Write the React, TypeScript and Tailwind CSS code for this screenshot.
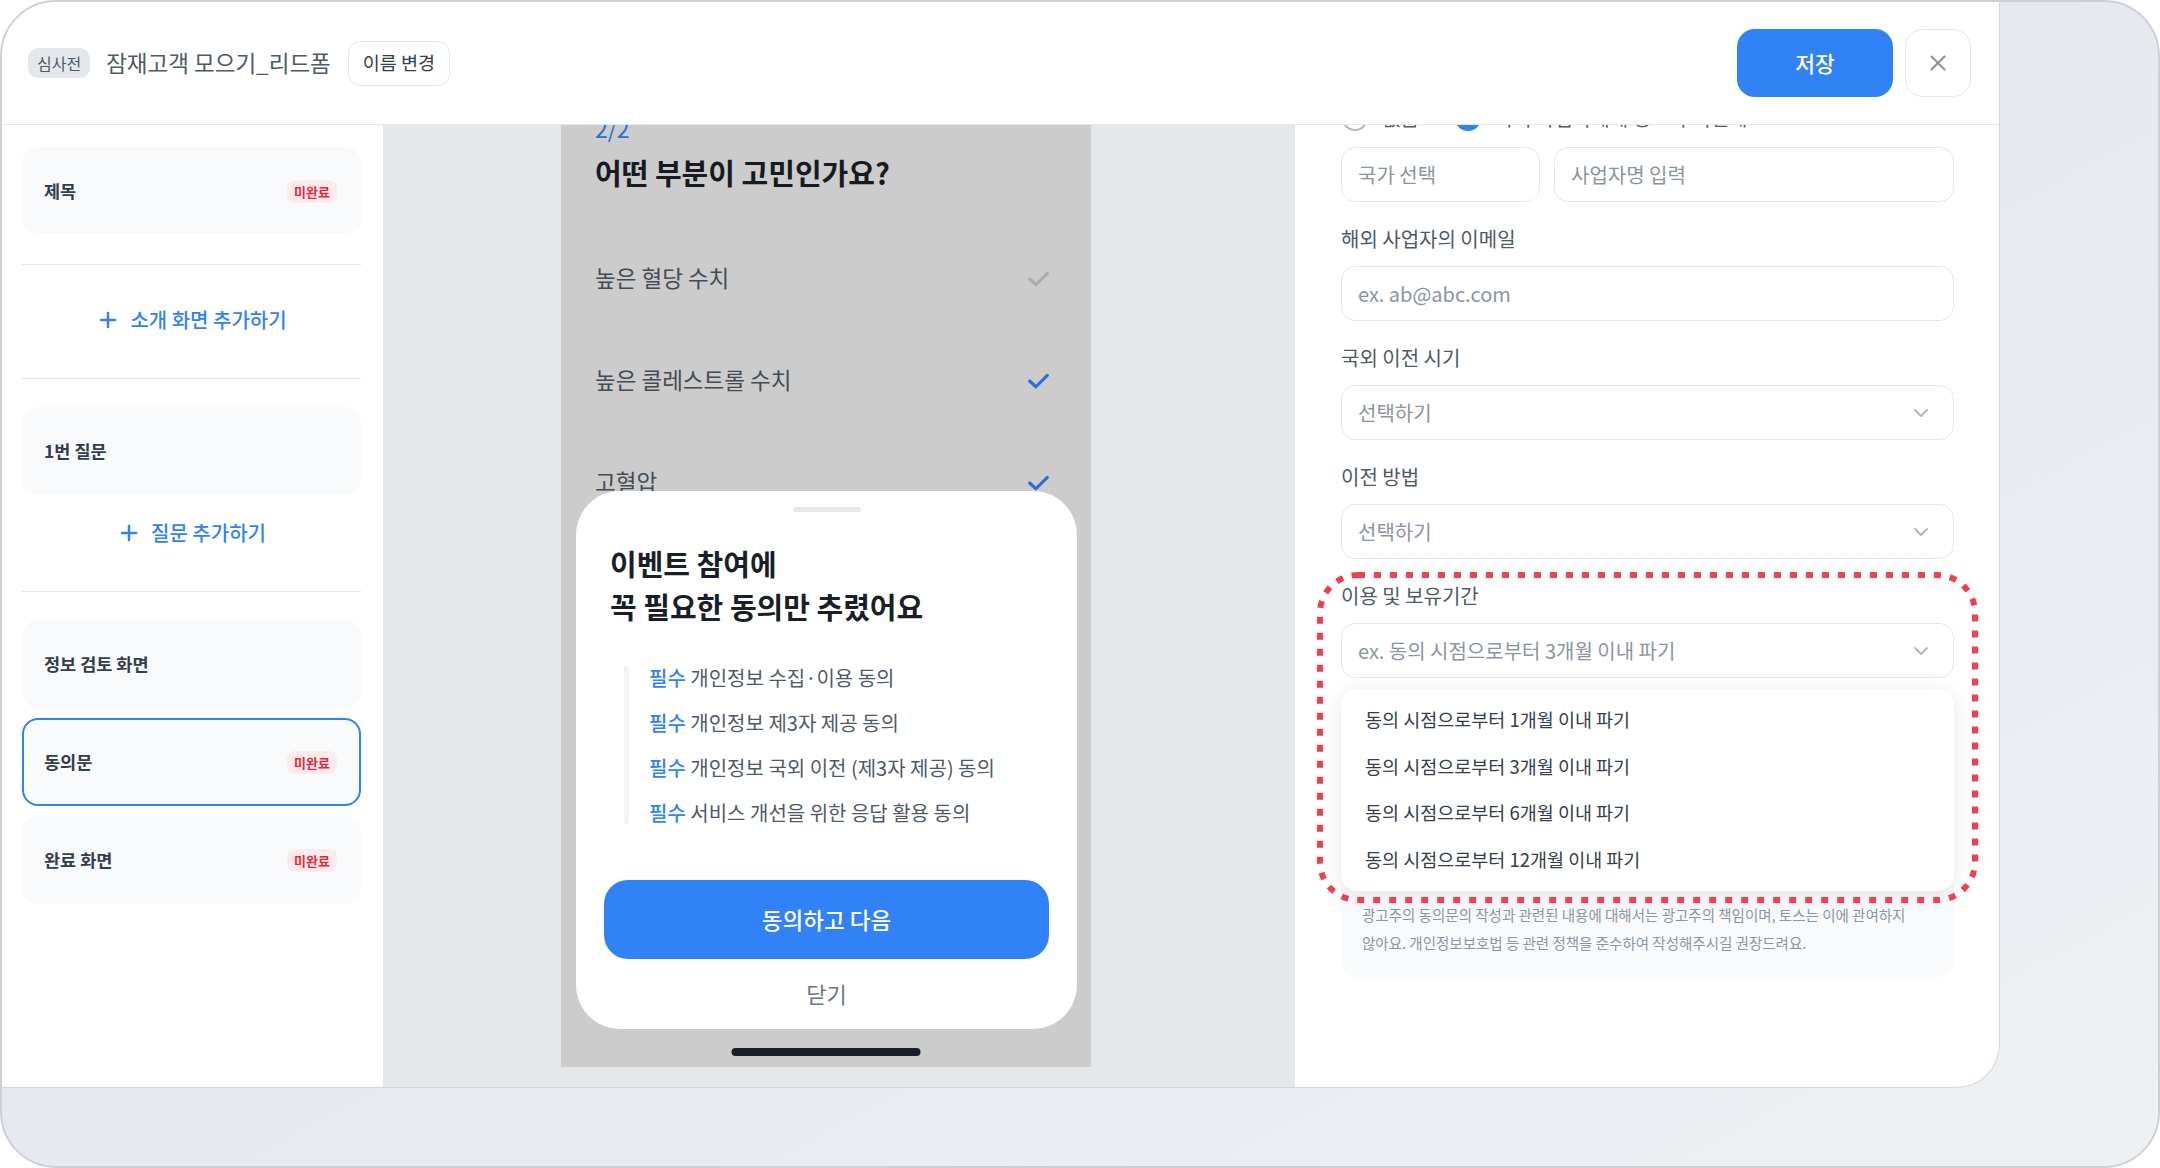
import React from 'react';
import { Plus, X, ChevronDown } from 'lucide-react';

interface StepCardProps {
  title: string;
  pending?: boolean;
  active?: boolean;
  className?: string;
}

const PendingBadge: React.FC = () => (
  <span className="rounded-[8px] bg-[#fdeaec] px-[7px] text-[13px] font-bold leading-[23px] text-[#e42939]">
    미완료
  </span>
);

const StepCard: React.FC<StepCardProps> = ({ title, pending, active, className = '' }) => (
  <div
    className={`flex h-[88px] items-center justify-between rounded-[16px] border-2 bg-[#f9fafb] pl-[20px] pr-[22px] ${
      active ? 'border-[#3182f6]' : 'border-transparent'
    } ${className}`}
  >
    <span className="text-[17.5px] font-semibold text-[#333d4b]">{title}</span>
    {pending && <PendingBadge />}
  </div>
);

const AddButton: React.FC<{ label: string; className?: string }> = ({ label, className = '' }) => (
  <button
    className={`flex h-[40px] w-full items-center justify-center gap-[10px] text-[20px] font-medium text-[#3182f6] ${className}`}
  >
    <Plus className="h-[24px] w-[24px]" strokeWidth={2.5} />
    {label}
  </button>
);

const Check: React.FC<{ on: boolean }> = ({ on }) => (
  <svg
    width="25"
    height="25"
    viewBox="0 0 24 24"
    fill="none"
    stroke={on ? '#2b6fd1' : '#a8adb3'}
    strokeWidth="3"
    strokeLinecap="round"
    strokeLinejoin="round"
  >
    <path d="M3.5 12.5l6 5.5L20.5 7" />
  </svg>
);

const Field: React.FC<{ label: string; className?: string; children: React.ReactNode }> = ({
  label,
  className = '',
  children,
}) => (
  <div className={`mt-[24px] ${className}`}>
    <p className="mb-[14px] text-[20px] leading-[26px] text-[#4e5968]">{label}</p>
    {children}
  </div>
);

const InputBox: React.FC<{ placeholder: string; select?: boolean; className?: string }> = ({
  placeholder,
  select,
  className = '',
}) => (
  <div
    className={`flex h-[55px] items-center justify-between rounded-[14px] border border-[#e5e8eb] bg-white pl-[16px] pr-[20px] ${className}`}
  >
    <span className="whitespace-nowrap text-[20px] text-[#8b95a1]">{placeholder}</span>
    {select && <ChevronDown className="h-[24px] w-[24px] text-[#b0b8c1]" strokeWidth={2} />}
  </div>
);

const questions = [
  { label: '높은 혈당 수치', on: false },
  { label: '높은 콜레스트롤 수치', on: true },
  { label: '고혈압', on: true },
];

const consents = [
  '개인정보 수집·이용 동의',
  '개인정보 제3자 제공 동의',
  '개인정보 국외 이전 (제3자 제공) 동의',
  '서비스 개선을 위한 응답 활용 동의',
];

const periods = [
  '동의 시점으로부터 1개월 이내 파기',
  '동의 시점으로부터 3개월 이내 파기',
  '동의 시점으로부터 6개월 이내 파기',
  '동의 시점으로부터 12개월 이내 파기',
];

const App: React.FC = () => {
  return (
    <div className="h-[1168px] w-[2160px] overflow-hidden rounded-[56px] border-2 border-[#cdd0d4] bg-linear-to-br from-[#dde3eb] to-[#eef1f4] font-['Noto_Sans_CJK_KR','Noto_Sans',sans-serif]">
      <div className="flex h-[1086px] w-[1998px] flex-col overflow-hidden rounded-br-[44px] border-b border-r border-[#d3d7dc] bg-white">
        {/* header */}
        <header className="flex h-[123px] shrink-0 items-center justify-between border-b border-[#e5e8eb] pl-[26px] pr-[28px]">
          <div className="flex items-center">
            <span className="rounded-[10px] bg-[#e5e8eb] px-[9px] text-[16px] leading-[30px] text-[#4e5968]">
              심사전
            </span>
            <h1 className="ml-[16px] text-[22.5px] text-[#4e5968]">잠재고객 모으기_리드폼</h1>
            <button className="ml-[17px] h-[45px] rounded-[12px] border border-[#e5e8eb] px-[14px] text-[18.5px] text-[#333d4b]">
              이름 변경
            </button>
          </div>
          <div className="flex items-center gap-[12px]">
            <button className="h-[68px] w-[156px] rounded-[18px] bg-[#3182f6] text-[21.5px] font-medium text-white">
              저장
            </button>
            <button className="flex h-[68px] w-[66px] items-center justify-center rounded-[18px] border border-[#e5e8eb]">
              <X className="h-[26px] w-[26px] text-[#8b95a1]" strokeWidth={2} />
            </button>
          </div>
        </header>

        <div className="flex min-h-0 flex-1">
          {/* steps */}
          <aside className="flex w-[381px] shrink-0 flex-col pl-[20px] pr-[22px] pt-[22px]">
            <StepCard title="제목" pending />
            <div className="mt-[29px] h-px bg-[#e5e8eb]" />
            <AddButton label="소개 화면 추가하기" className="mt-[35px]" />
            <div className="mt-[38px] h-px bg-[#e5e8eb]" />
            <StepCard title="1번 질문" className="mt-[28px]" />
            <AddButton label="질문 추가하기" className="mt-[18px]" />
            <div className="mt-[38px] h-px bg-[#e5e8eb]" />
            <StepCard title="정보 검토 화면" className="mt-[28px]" />
            <StepCard title="동의문" pending active className="mt-[10px]" />
            <StepCard title="완료 화면" pending className="mt-[10px]" />
          </aside>

          {/* preview */}
          <main className="flex-1 overflow-hidden bg-[#e5e8eb] pl-[178px]">
            <div className="relative h-[942px] w-[530px] overflow-hidden bg-[#cccccc]">
              <div className="-mt-[11px] pl-[34px] pr-[40px]">
                <p className="text-[23px] leading-[28px] text-[#2b6fd1]">2/2</p>
                <h2 className="mt-[12px] text-[29px] font-bold leading-[36px] text-[#161b22]">
                  어떤 부분이 고민인가요?
                </h2>
                <ul className="mt-[37px]">
                  {questions.map((q) => (
                    <li key={q.label} className="flex h-[102px] items-center justify-between">
                      <span className="text-[22.5px] text-[#434b55]">{q.label}</span>
                      <Check on={q.on} />
                    </li>
                  ))}
                </ul>
              </div>

              {/* consent sheet */}
              <div className="absolute bottom-[38px] left-[15px] right-[14px] flex flex-col rounded-[44px] bg-white px-[28px] pb-[22px] pt-[16px]">
                <div className="mx-auto h-[5px] w-[68px] rounded-full bg-[#e5e8eb]" />
                <h3 className="mt-[30px] px-[6px] text-[29px] font-bold leading-[43px] text-[#191f28]">
                  이벤트 참여에
                  <br />
                  꼭 필요한 동의만 추렸어요
                </h3>
                <div className="mt-[27px] flex pl-[20px]">
                  <div className="my-[11px] w-[5px] rounded-full bg-[#f2f4f6]" />
                  <ul className="pl-[20px]">
                    {consents.map((c) => (
                      <li key={c} className="whitespace-nowrap text-[20px] leading-[45px] text-[#4e5968]">
                        <span className="font-medium text-[#3182f6]">필수</span> {c}
                      </li>
                    ))}
                  </ul>
                </div>
                <button className="mt-[45px] h-[79px] rounded-[24px] bg-[#3182f6] text-[22.5px] font-medium text-white">
                  동의하고 다음
                </button>
                <button className="mt-[20px] text-[22px] leading-[28px] text-[#6b7684]">닫기</button>
              </div>

              <div className="absolute bottom-[11px] left-1/2 h-[8px] w-[189px] -translate-x-1/2 rounded-full bg-[#191f28]" />
            </div>
          </main>

          {/* settings form */}
          <section className="w-[704px] shrink-0 overflow-hidden pl-[46px] pr-[45px]">
            <div className="-mt-[20px]">
              <div className="flex h-[26px] items-center text-[20px] text-[#4e5968]">
                <span className="ml-[1px] h-[26px] w-[26px] rounded-full border-2 border-[#b0b8c1]" />
                <span className="ml-[14px]">없음</span>
                <span className="ml-[36px] flex h-[26px] w-[26px] items-center justify-center rounded-full bg-[#3182f6]">
                  <span className="h-[10px] w-[10px] rounded-full bg-white" />
                </span>
                <span className="ml-[14px]">국외 사업자에게 정보가 이전돼요</span>
              </div>

              <div className="mt-[16px] flex gap-[14px]">
                <InputBox placeholder="국가 선택" className="w-[199px]" />
                <InputBox placeholder="사업자명 입력" className="flex-1" />
              </div>

              <Field label="해외 사업자의 이메일">
                <InputBox placeholder="ex. ab@abc.com" />
              </Field>
              <Field label="국외 이전 시기">
                <InputBox placeholder="선택하기" select />
              </Field>
              <Field label="이전 방법">
                <InputBox placeholder="선택하기" select />
              </Field>
              <Field label="이용 및 보유기간" className="relative">
                <InputBox placeholder="ex. 동의 시점으로부터 3개월 이내 파기" select />

                <div className="absolute left-0 right-0 top-[106px] z-10 h-[202px] rounded-[16px] bg-white py-[8px] shadow-[0_4px_22px_rgba(0,0,0,0.10)]">
                  {periods.map((p) => (
                    <div key={p} className="flex h-[46.5px] items-center pl-[24px] text-[18.5px] text-[#333d4b]">
                      {p}
                    </div>
                  ))}
                </div>

                <svg
                  className="pointer-events-none absolute -left-[24px] -top-[11px] z-20"
                  width="661"
                  height="331"
                  viewBox="0 0 661 331"
                  fill="none"
                >
                  <rect
                    x="3"
                    y="3"
                    width="655"
                    height="325"
                    rx="38"
                    stroke="#f0404f"
                    strokeWidth="6"
                    strokeDasharray="7 9"
                  />
                </svg>
              </Field>

              <div className="mt-[14px] flex h-[285px] flex-col justify-end rounded-[16px] bg-[#f9fafb] px-[21px] pb-[20px] text-[14.5px] leading-[28px] text-[#8b95a1]">
                <p className="whitespace-nowrap">
                  광고주의 동의문의 작성과 관련된 내용에 대해서는 광고주의 책임이며, 토스는 이에 관여하지
                </p>
                <p className="whitespace-nowrap">
                  않아요. 개인정보보호법 등 관련 정책을 준수하여 작성해주시길 권장드려요.
                </p>
              </div>
            </div>
          </section>
        </div>
      </div>
    </div>
  );
};

export default App;
